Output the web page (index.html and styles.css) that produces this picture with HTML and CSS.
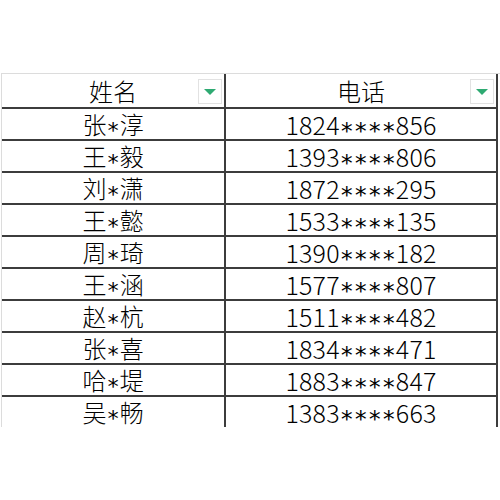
FILE: index.html
```html
<!DOCTYPE html>
<html lang="zh">
<head>
<meta charset="utf-8">
<link rel="stylesheet" href="styles.css">
</head>
<body>
<div class="sheet">
  <div class="cell head"><span class="txt">姓名</span><span class="filter"><span class="tri"></span></span></div>
  <div class="cell head"><span class="txt">电话</span><span class="filter"><span class="tri"></span></span></div>
  <div class="cell"><span class="txt">张<span class="ast">*</span>淳</span></div><div class="cell num"><span class="txt">1824<span class="ast">****</span>856</span></div>
  <div class="cell"><span class="txt">王<span class="ast">*</span>毅</span></div><div class="cell num"><span class="txt">1393<span class="ast">****</span>806</span></div>
  <div class="cell"><span class="txt">刘<span class="ast">*</span>潇</span></div><div class="cell num"><span class="txt">1872<span class="ast">****</span>295</span></div>
  <div class="cell"><span class="txt">王<span class="ast">*</span>懿</span></div><div class="cell num"><span class="txt">1533<span class="ast">****</span>135</span></div>
  <div class="cell"><span class="txt">周<span class="ast">*</span>琦</span></div><div class="cell num"><span class="txt">1390<span class="ast">****</span>182</span></div>
  <div class="cell"><span class="txt">王<span class="ast">*</span>涵</span></div><div class="cell num"><span class="txt">1577<span class="ast">****</span>807</span></div>
  <div class="cell"><span class="txt">赵<span class="ast">*</span>杭</span></div><div class="cell num"><span class="txt">1511<span class="ast">****</span>482</span></div>
  <div class="cell"><span class="txt">张<span class="ast">*</span>喜</span></div><div class="cell num"><span class="txt">1834<span class="ast">****</span>471</span></div>
  <div class="cell"><span class="txt">哈<span class="ast">*</span>堤</span></div><div class="cell num"><span class="txt">1883<span class="ast">****</span>847</span></div>
  <div class="cell last"><span class="txt">吴<span class="ast">*</span>畅</span></div><div class="cell num last"><span class="txt">1383<span class="ast">****</span>663</span></div>
</div>
</body>
</html>
```
FILE: styles.css
```css
html, body {
  margin: 0;
  padding: 0;
  background: #fff;
}
body {
  width: 500px;
  height: 500px;
  padding-top: 73px;
  box-sizing: border-box;
  font-family: "Noto Sans CJK SC", "Noto Sans", sans-serif;
  font-weight: 300;
  color: #000;
}
.sheet {
  margin-left: 1px;
  border-left: 1px solid #dcdcdc;
  border-top: 1px solid #dcdcdc;
  display: grid;
  grid-template-columns: 224px 272px;
  width: 498px;
}
.cell {
  height: 30px;
  border-right: 2px solid #3c3c3c;
  border-bottom: 2px solid #3c3c3c;
  display: flex;
  align-items: center;
  justify-content: center;
  font-size: 24px;
  line-height: 26px;
  position: relative;
  white-space: pre;
}
.cell.head {
  height: 33px;
}
.cell.last {
  border-bottom: none;
}
.txt {
  display: block;
  line-height: 26px;
}
.num {
  font-size: 25px;
  letter-spacing: 0.2px;
}
.ast {
  font-family: "DejaVu Sans Mono", monospace;
  font-weight: normal;
  font-size: 22px;
  line-height: 14px;
  vertical-align: -4px;
  letter-spacing: 0;
}
.num .ast {
  font-size: 23.3px;
  letter-spacing: 0;
}
.filter {
  position: absolute;
  right: 2px;
  top: 5px;
  width: 24px;
  height: 25px;
  border: 1px solid #e2e2e2;
  background: #fff;
  box-sizing: border-box;
  display: flex;
  align-items: center;
  justify-content: center;
}
.tri {
  width: 0;
  height: 0;
  border-left: 6px solid transparent;
  border-right: 6px solid transparent;
  border-top: 6px solid #2eaa72;
}
```
